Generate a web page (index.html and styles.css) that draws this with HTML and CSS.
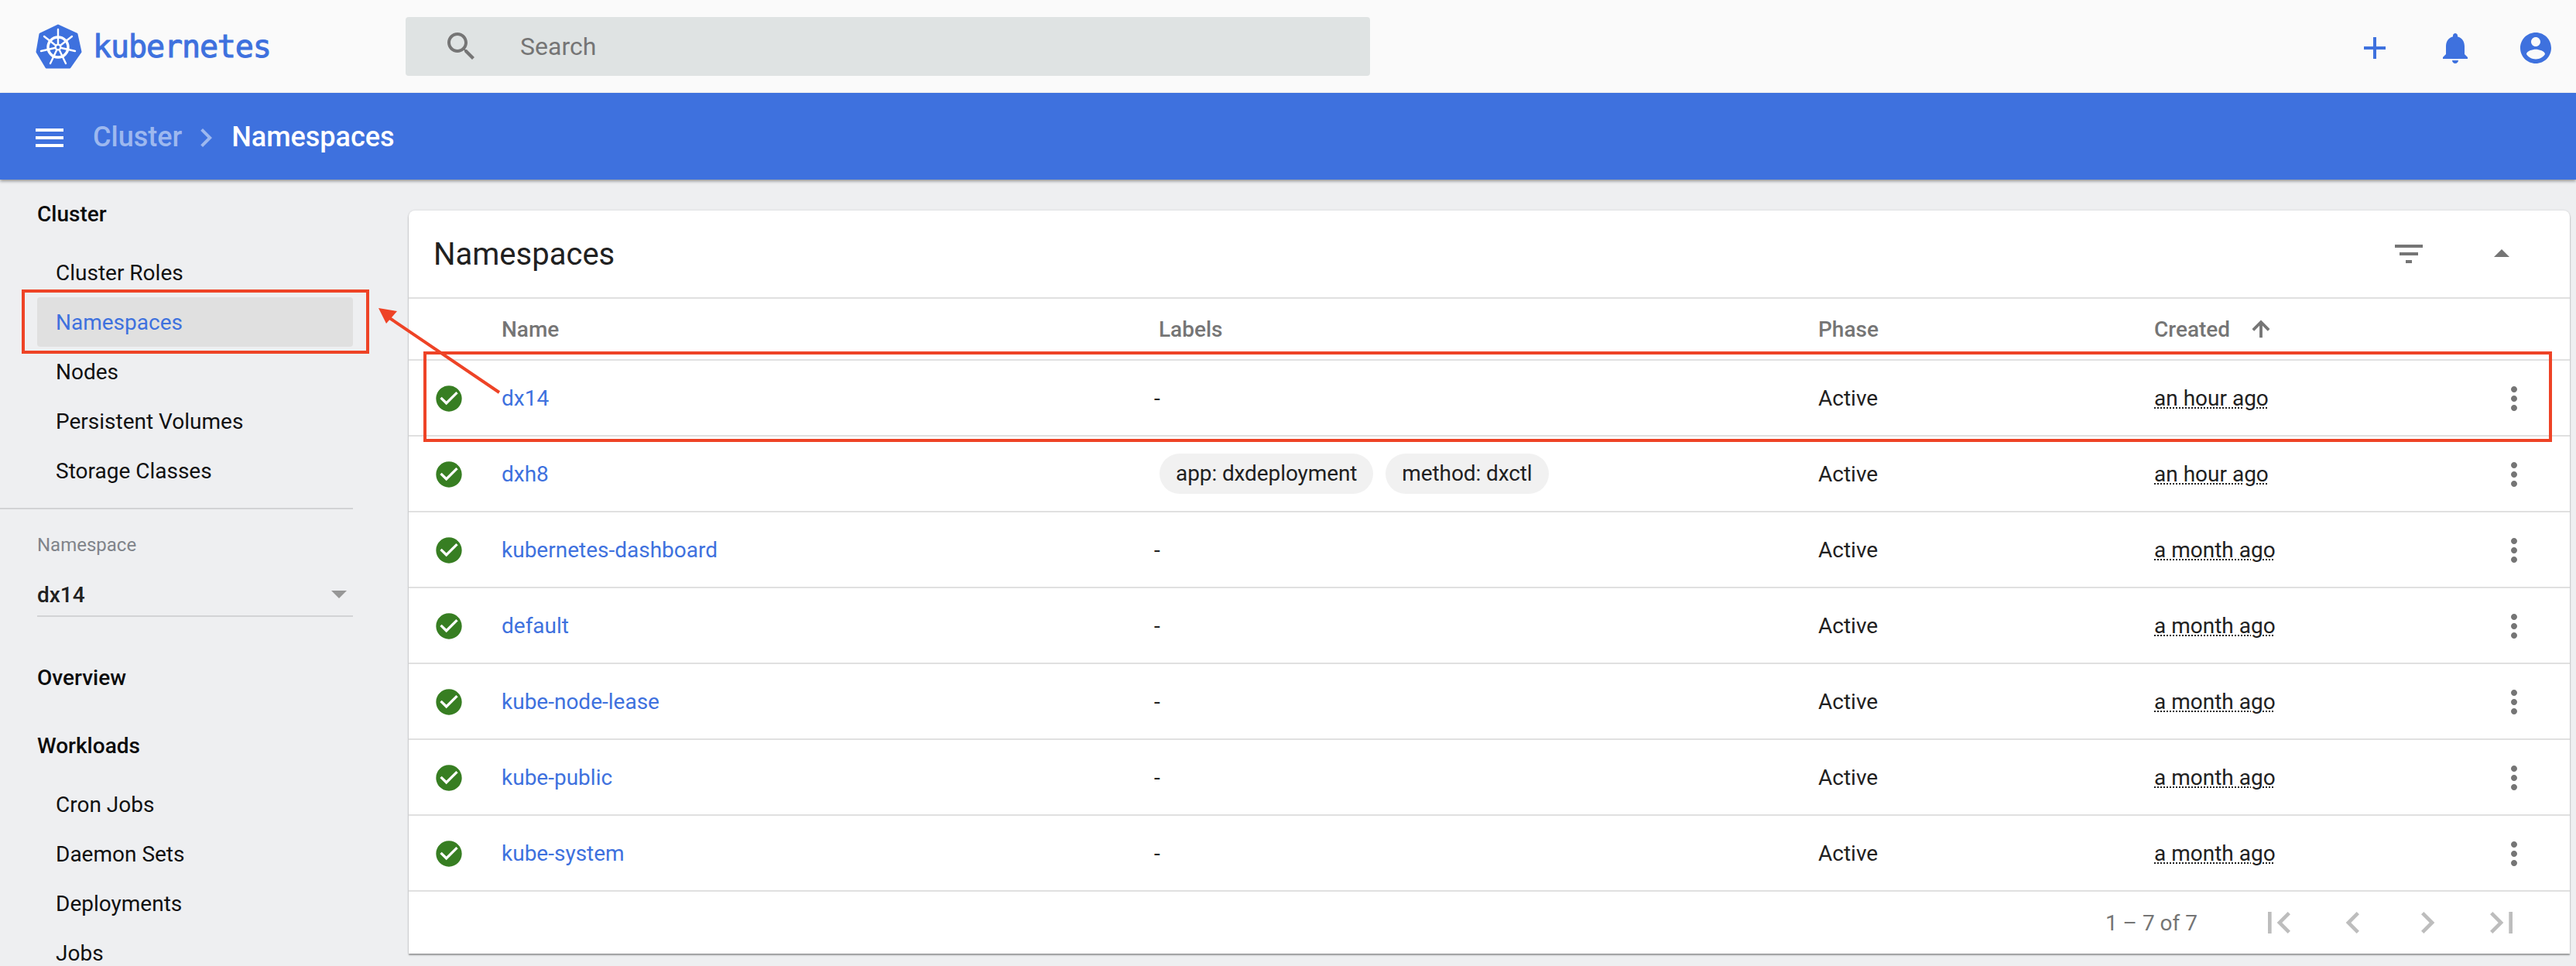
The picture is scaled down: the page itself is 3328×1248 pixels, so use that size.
FILE: index.html
```html
<!DOCTYPE html>
<html lang="en">
<head>
  <meta charset="UTF-8" />
  <title>Namespaces - Kubernetes Dashboard</title>
  <link rel="stylesheet" href="styles.css">
</head>
<body>

<!-- top toolbar -->
<header class="toolbar">
  <div class="brand">
    <svg class="brand-logo" width="60" height="60" viewBox="0 0 60 60">
      <polygon points="29,3 53,14 58,37 44,57 14,57 2,37 6,14" fill="#3e71de" stroke="#3e71de" stroke-width="3" stroke-linejoin="round"/>
      <g fill="none" stroke="#fff" stroke-linecap="round">
        <circle cx="29" cy="31" r="13" stroke-width="3.4"/>
        <path stroke-width="2.4" d="M29 31V8M29 31L47 17M29 31L51 36M29 31L39 52M29 31L19 52M29 31L7 36M29 31L11 17"/>
      </g>
      <circle cx="29" cy="31" r="4.5" fill="#fff"/>
      <circle cx="29" cy="31" r="2.2" fill="#3e71de"/>
    </svg>
    <span class="brand-name">kubernetes</span>
  </div>
  <div class="search">
    <svg class="icon" width="48" height="48" viewBox="0 0 24 24" fill="#757575"><path d="M15.5 14h-.79l-.28-.27C15.41 12.59 16 11.11 16 9.5 16 5.91 13.09 3 9.5 3S3 5.91 3 9.5 5.91 16 9.5 16c1.61 0 3.09-.59 4.23-1.57l.27.28v.79l5 4.99L20.49 19l-4.99-5zm-6 0C7.01 14 5 11.99 5 9.5S7.01 5 9.5 5 14 7.01 14 9.5 11.99 14 9.5 14z"/></svg>
    <span class="search-text">Search</span>
  </div>
  <div class="toolbar-actions">
    <svg class="icon" width="48" height="48" viewBox="0 0 24 24"><path d="M19 13h-6v6h-2v-6H5v-2h6V5h2v6h6v2z"/></svg>
    <svg class="icon" width="48" height="48" viewBox="0 0 24 24"><path d="M12 22c1.1 0 2-.9 2-2h-4c0 1.1.89 2 2 2zm6-6v-5c0-3.07-1.64-5.64-4.5-6.32V4c0-.83-.67-1.5-1.5-1.5s-1.5.67-1.5 1.5v.68C7.63 5.36 6 7.92 6 11v5l-2 2v1h16v-1l-2-2z"/></svg>
    <svg class="icon" width="48" height="48" viewBox="0 0 24 24"><path d="M12 2C6.48 2 2 6.48 2 12s4.48 10 10 10 10-4.48 10-10S17.52 2 12 2zm0 3c1.66 0 3 1.34 3 3s-1.34 3-3 3-3-1.34-3-3 1.34-3 3-3zm0 14.2c-2.5 0-4.71-1.28-6-3.22.03-1.99 4-3.08 6-3.08 1.99 0 5.97 1.09 6 3.08-1.29 1.94-3.5 3.22-6 3.22z"/></svg>
  </div>
</header>

<!-- breadcrumb bar -->
<div class="crumbbar">
  <svg class="crumb-menu" width="48" height="48" viewBox="0 0 24 24" fill="#fff"><path d="M3 18h18v-2H3v2zm0-5h18v-2H3v2zm0-7v2h18V6H3z"/></svg>
  <span class="crumb-parent">Cluster</span>
  <svg class="crumb-sep" width="48" height="48" viewBox="0 0 24 24" fill="#9db8ef"><path d="M8.59 16.59L13.17 12 8.59 7.41 10 6l6 6-6 6z"/></svg>
  <span class="crumb-current">Namespaces</span>
</div>

<div class="layout">

  <!-- side navigation -->
  <nav class="sidebar">
    <div class="nav-head nav-first">Cluster</div>
    <a class="nav-item">Cluster Roles</a>
    <a class="nav-item selected">Namespaces</a>
    <a class="nav-item">Nodes</a>
    <a class="nav-item">Persistent Volumes</a>
    <a class="nav-item">Storage Classes</a>
    <div class="nav-divider"></div>
    <div class="ns-label">Namespace</div>
    <div class="ns-select">
      <span>dx14</span>
      <span class="ns-arrow"></span>
    </div>
    <div class="nav-head nav-overview">Overview</div>
    <div class="nav-head nav-workloads">Workloads</div>
    <a class="nav-item">Cron Jobs</a>
    <a class="nav-item">Daemon Sets</a>
    <a class="nav-item">Deployments</a>
    <a class="nav-item">Jobs</a>
  </nav>

  <!-- namespaces card -->
  <main class="main">
    <section class="card">
      <div class="card-title">
        <h2>Namespaces</h2>
        <div class="card-tools">
          <svg width="48" height="48" viewBox="0 0 24 24" fill="#757575"><path d="M10 18h4v-2h-4v2zM3 6v2h18V6H3zm3 7h12v-2H6v2z"/></svg>
          <svg width="48" height="48" viewBox="0 0 24 24" fill="#757575"><path d="M7 14l5-5 5 5z"/></svg>
        </div>
      </div>

      <div class="row head">
        <span></span>
        <span>Name</span>
        <span class="head-labels">Labels</span>
        <span>Phase</span>
        <span class="head-created">Created
          <svg width="32" height="32" viewBox="0 0 24 24" fill="#757575" stroke="#757575" stroke-width="0.8"><path d="M4 12l1.41 1.41L11 7.83V20h2V7.83l5.58 5.59L20 12l-8-8-8 8z"/></svg>
        </span>
        <span></span>
      </div>

      <div class="row">
        <svg class="ok" width="40" height="40" viewBox="0 0 24 24"><path d="M12 2C6.48 2 2 6.48 2 12s4.48 10 10 10 10-4.48 10-10S17.52 2 12 2zm-2 15l-5-5 1.41-1.41L10 14.17l7.59-7.59L19 8l-9 9z"/></svg>
        <a class="link">dx14</a>
        <span>-</span>
        <span>Active</span>
        <span class="age">an hour ago</span>
        <svg class="more" width="48" height="48" viewBox="0 0 24 24"><path d="M12 8c1.1 0 2-.9 2-2s-.9-2-2-2-2 .9-2 2 .9 2 2 2zm0 2c-1.1 0-2 .9-2 2s.9 2 2 2 2-.9 2-2-.9-2-2-2zm0 6c-1.1 0-2 .9-2 2s.9 2 2 2 2-.9 2-2-.9-2-2-2z"/></svg>
      </div>

      <div class="row">
        <svg class="ok" width="40" height="40" viewBox="0 0 24 24"><path d="M12 2C6.48 2 2 6.48 2 12s4.48 10 10 10 10-4.48 10-10S17.52 2 12 2zm-2 15l-5-5 1.41-1.41L10 14.17l7.59-7.59L19 8l-9 9z"/></svg>
        <a class="link">dxh8</a>
        <div class="chips">
          <span class="chip">app: dxdeployment</span>
          <span class="chip">method: dxctl</span>
        </div>
        <span>Active</span>
        <span class="age">an hour ago</span>
        <svg class="more" width="48" height="48" viewBox="0 0 24 24"><path d="M12 8c1.1 0 2-.9 2-2s-.9-2-2-2-2 .9-2 2 .9 2 2 2zm0 2c-1.1 0-2 .9-2 2s.9 2 2 2 2-.9 2-2-.9-2-2-2zm0 6c-1.1 0-2 .9-2 2s.9 2 2 2 2-.9 2-2-.9-2-2-2z"/></svg>
      </div>

      <div class="row">
        <svg class="ok" width="40" height="40" viewBox="0 0 24 24"><path d="M12 2C6.48 2 2 6.48 2 12s4.48 10 10 10 10-4.48 10-10S17.52 2 12 2zm-2 15l-5-5 1.41-1.41L10 14.17l7.59-7.59L19 8l-9 9z"/></svg>
        <a class="link">kubernetes-dashboard</a>
        <span>-</span>
        <span>Active</span>
        <span class="age">a month ago</span>
        <svg class="more" width="48" height="48" viewBox="0 0 24 24"><path d="M12 8c1.1 0 2-.9 2-2s-.9-2-2-2-2 .9-2 2 .9 2 2 2zm0 2c-1.1 0-2 .9-2 2s.9 2 2 2 2-.9 2-2-.9-2-2-2zm0 6c-1.1 0-2 .9-2 2s.9 2 2 2 2-.9 2-2-.9-2-2-2z"/></svg>
      </div>

      <div class="row">
        <svg class="ok" width="40" height="40" viewBox="0 0 24 24"><path d="M12 2C6.48 2 2 6.48 2 12s4.48 10 10 10 10-4.48 10-10S17.52 2 12 2zm-2 15l-5-5 1.41-1.41L10 14.17l7.59-7.59L19 8l-9 9z"/></svg>
        <a class="link">default</a>
        <span>-</span>
        <span>Active</span>
        <span class="age">a month ago</span>
        <svg class="more" width="48" height="48" viewBox="0 0 24 24"><path d="M12 8c1.1 0 2-.9 2-2s-.9-2-2-2-2 .9-2 2 .9 2 2 2zm0 2c-1.1 0-2 .9-2 2s.9 2 2 2 2-.9 2-2-.9-2-2-2zm0 6c-1.1 0-2 .9-2 2s.9 2 2 2 2-.9 2-2-.9-2-2-2z"/></svg>
      </div>

      <div class="row">
        <svg class="ok" width="40" height="40" viewBox="0 0 24 24"><path d="M12 2C6.48 2 2 6.48 2 12s4.48 10 10 10 10-4.48 10-10S17.52 2 12 2zm-2 15l-5-5 1.41-1.41L10 14.17l7.59-7.59L19 8l-9 9z"/></svg>
        <a class="link">kube-node-lease</a>
        <span>-</span>
        <span>Active</span>
        <span class="age">a month ago</span>
        <svg class="more" width="48" height="48" viewBox="0 0 24 24"><path d="M12 8c1.1 0 2-.9 2-2s-.9-2-2-2-2 .9-2 2 .9 2 2 2zm0 2c-1.1 0-2 .9-2 2s.9 2 2 2 2-.9 2-2-.9-2-2-2zm0 6c-1.1 0-2 .9-2 2s.9 2 2 2 2-.9 2-2-.9-2-2-2z"/></svg>
      </div>

      <div class="row">
        <svg class="ok" width="40" height="40" viewBox="0 0 24 24"><path d="M12 2C6.48 2 2 6.48 2 12s4.48 10 10 10 10-4.48 10-10S17.52 2 12 2zm-2 15l-5-5 1.41-1.41L10 14.17l7.59-7.59L19 8l-9 9z"/></svg>
        <a class="link">kube-public</a>
        <span>-</span>
        <span>Active</span>
        <span class="age">a month ago</span>
        <svg class="more" width="48" height="48" viewBox="0 0 24 24"><path d="M12 8c1.1 0 2-.9 2-2s-.9-2-2-2-2 .9-2 2 .9 2 2 2zm0 2c-1.1 0-2 .9-2 2s.9 2 2 2 2-.9 2-2-.9-2-2-2zm0 6c-1.1 0-2 .9-2 2s.9 2 2 2 2-.9 2-2-.9-2-2-2z"/></svg>
      </div>

      <div class="row">
        <svg class="ok" width="40" height="40" viewBox="0 0 24 24"><path d="M12 2C6.48 2 2 6.48 2 12s4.48 10 10 10 10-4.48 10-10S17.52 2 12 2zm-2 15l-5-5 1.41-1.41L10 14.17l7.59-7.59L19 8l-9 9z"/></svg>
        <a class="link">kube-system</a>
        <span>-</span>
        <span>Active</span>
        <span class="age">a month ago</span>
        <svg class="more" width="48" height="48" viewBox="0 0 24 24"><path d="M12 8c1.1 0 2-.9 2-2s-.9-2-2-2-2 .9-2 2 .9 2 2 2zm0 2c-1.1 0-2 .9-2 2s.9 2 2 2 2-.9 2-2-.9-2-2-2zm0 6c-1.1 0-2 .9-2 2s.9 2 2 2 2-.9 2-2-.9-2-2-2z"/></svg>
      </div>

      <div class="pager">
        <span class="pager-range">1 – 7 of 7</span>
        <span class="pager-btn"><svg width="56" height="56" viewBox="0 0 24 24"><path d="M18.41 16.59L13.82 12l4.59-4.59L17 6l-6 6 6 6zM6 6h2v12H6z"/></svg></span>
        <span class="pager-btn"><svg width="56" height="56" viewBox="0 0 24 24"><path d="M15.41 7.41L14 6l-6 6 6 6 1.41-1.41L10.83 12z"/></svg></span>
        <span class="pager-btn"><svg width="56" height="56" viewBox="0 0 24 24"><path d="M10 6L8.59 7.41 13.17 12l-4.58 4.59L10 18l6-6z"/></svg></span>
        <span class="pager-btn"><svg width="56" height="56" viewBox="0 0 24 24"><path d="M5.59 7.41L10.18 12l-4.59 4.59L7 18l6-6-6-6zM16 6h2v12h-2z"/></svg></span>
      </div>
    </section>
  </main>
</div>

<!-- red annotations drawn over the screenshot -->
<svg class="annotations" width="3328" height="1248" viewBox="0 0 3328 1248">
  <rect x="30" y="376" width="445" height="79" fill="none" stroke="#ee4326" stroke-width="4"/>
  <rect x="549" y="456" width="2746" height="113" fill="none" stroke="#ee4326" stroke-width="4"/>
  <line x1="645" y1="507" x2="502" y2="410" stroke="#ee4326" stroke-width="4"/>
  <polygon points="489,398 513,402 499,418" fill="#ee4326"/>
</svg>

</body>
</html>
```

FILE: styles.css
```css
html, body {
  margin: 0;
  height: 1248px;
  overflow: hidden;
}
body {
  position: relative;
  font-family: Roboto, "Liberation Sans", sans-serif;
  font-size: 28px;
  color: #212121;
  background-color: #eeeff1;
}

/* toolbar */
.toolbar {
  display: flex;
  align-items: center;
  height: 120px;
  background-color: #fafafa;
}
.brand {
  display: flex;
  align-items: center;
  width: 524px;
  padding-left: 46px;
  box-sizing: border-box;
}
.brand-logo {
  flex: none;
}
.brand-name {
  margin-left: 14px;
  font-family: "DejaVu Sans Mono", monospace;
  font-size: 40px;
  letter-spacing: -1.1px;
  color: #3e71de;
  -webkit-text-stroke: 1px #3e71de;
}
.search {
  display: flex;
  align-items: center;
  width: 1246px;
  height: 76px;
  padding-left: 48px;
  box-sizing: border-box;
  background-color: #dfe3e3;
  border-radius: 4px;
}
.search-text {
  margin-left: 52px;
  font-size: 32px;
  color: #757575;
}
.toolbar-actions {
  display: flex;
  gap: 56px;
  margin-left: auto;
  padding-right: 28px;
  padding-top: 4px;
}
.toolbar-actions .icon {
  fill: #3e71de;
}

/* breadcrumb */
.crumbbar {
  position: relative;
  display: flex;
  align-items: center;
  height: 112px;
  padding-left: 40px;
  background-color: #3e71de;
  box-shadow: 0 2px 4px rgba(0, 0, 0, 0.4);
  font-size: 36px;
  font-weight: 500;
  color: #fff;
}
.crumb-menu {
  margin-right: 32px;
  margin-top: 4px;
}
.crumb-parent {
  color: #9db8ef;
  padding-top: 2px;
}
.crumb-current {
  padding-top: 2px;
}
.crumb-sep {
  margin: 4px 9px 0 7px;
}

.layout {
  display: flex;
  height: 1016px;
}

/* sidebar */
.sidebar {
  flex: none;
  width: 456px;
  margin-right: 72px;
}
.nav-head {
  height: 64px;
  padding-left: 48px;
  line-height: 64px;
  font-weight: 500;
  color: #0c0c0c;
}
.nav-first {
  margin-top: 13px;
  margin-bottom: 11px;
}
.nav-overview {
  margin-top: 47px;
}
.nav-workloads {
  margin-top: 24px;
  margin-bottom: 11px;
}
.nav-item {
  display: block;
  height: 64px;
  margin-left: 48px;
  padding-left: 24px;
  line-height: 66px;
  border-radius: 4px;
  color: #111;
}
.nav-item.selected {
  background-color: #e0e0e0;
  color: #3e71de;
}
.nav-divider {
  height: 2px;
  margin-top: 16px;
  background-color: #d2d3d5;
}
.ns-label {
  margin: 29px 0 0 48px;
  font-size: 24px;
  line-height: 34px;
  color: #80848a;
}
.ns-select {
  display: flex;
  align-items: center;
  justify-content: space-between;
  height: 56px;
  margin: 20px 0 0 48px;
  padding: 0 8px 0 0;
  box-sizing: border-box;
  border-bottom: 2px solid #d2d3d5;
  font-weight: 500;
}
.ns-arrow {
  width: 0;
  height: 0;
  border-left: 10px solid transparent;
  border-right: 10px solid transparent;
  border-top: 10px solid #979797;
}

/* card */
.main {
  flex: 1;
  padding: 40px 8px 0 0;
}
.card {
  height: 960px;
  background: white;
  border-radius: 8px 8px 0 0;
  box-shadow: 0 2px 2px rgba(0, 0, 0, 0.35), 0 0 3px rgba(0, 0, 0, 0.12);
}
.card-title {
  display: flex;
  align-items: center;
  justify-content: space-between;
  height: 112px;
  padding: 0 64px 0 32px;
  border-bottom: 2px solid #e0e0e0;
}
.card-title h2 {
  margin: 0;
  font-size: 40px;
  font-weight: 400;
}
.card-tools {
  display: flex;
  gap: 72px;
}

/* table rows */
.row {
  display: grid;
  grid-template-columns: 88px 843px 858px 434px 441px 48px;
  align-items: center;
  height: 96px;
  padding-left: 32px;
  border-bottom: 2px solid #e0e0e0;
}
.row.head {
  height: 78px;
  font-weight: 500;
  color: #757575;
}
.head-labels {
  padding-left: 6px;
}
.head-created {
  display: flex;
  align-items: center;
}
.head-created svg {
  margin-left: 24px;
}
.ok {
  fill: #377e22;
  margin-top: 2px;
}
.more {
  fill: #757575;
  margin-top: 2px;
}
.link {
  color: #3e71de;
}
.age {
  justify-self: start;
  text-decoration: underline dotted 2px;
  text-underline-offset: 3px;
}
.chips {
  display: flex;
  gap: 16px;
  padding-left: 7px;
}
.chip {
  height: 52px;
  padding: 0 21px;
  line-height: 52px;
  border-radius: 26px;
  background-color: #f1f1f1;
  letter-spacing: -0.1px;
}

/* paginator */
.pager {
  display: flex;
  align-items: center;
  justify-content: flex-end;
  height: 80px;
  padding-right: 40px;
}
.pager-range {
  margin-right: 57px;
  color: #757575;
}
.pager-btn {
  display: flex;
  justify-content: center;
  width: 96px;
  fill: #bdbdbd;
}

.annotations {
  position: absolute;
  left: 0;
  top: 0;
}
```
